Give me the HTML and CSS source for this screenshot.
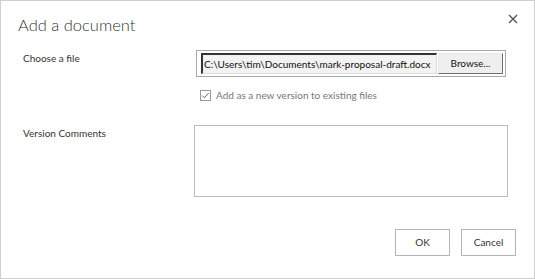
FILE: index.html
```html
<!DOCTYPE html>
<html>
<head>
<meta charset="utf-8">
<link rel="stylesheet" href="styles.css">
</head>
<body>
<div class="dialog">
  <div class="header">
    <h1 class="title">Add a document</h1>
    <span class="close" aria-label="Close">
      <svg width="10" height="10" viewBox="0 0 10 10"><path d="M1 1L9 9M9 1L1 9" stroke="#555" stroke-width="1.4" fill="none"/></svg>
    </span>
  </div>
  <div class="row row-file">
    <div class="label">Choose a file</div>
    <div class="field">
      <div class="filebox">
        <div class="filepath">C:\Users\tim\Documents\mark-proposal-draft.docx</div>
        <div class="browse">Browse...</div>
      </div>
      <label class="check">
        <span class="box"><svg width="9" height="9" viewBox="0 0 9 9"><path d="M1.2 4.6L3.4 6.8L7.8 1.8" stroke="#666" stroke-width="1" fill="none"/></svg></span>
        <span class="check-text">Add as a new version to existing files</span>
      </label>
    </div>
  </div>
  <div class="row row-comments">
    <div class="label">Version Comments</div>
    <div class="field">
      <div class="textarea"></div>
    </div>
  </div>
  <div class="footer">
    <div class="btn">OK</div>
    <div class="btn">Cancel</div>
  </div>
</div>
</body>
</html>
```

FILE: styles.css
```css
html, body {
  margin: 0;
  padding: 0;
  background: #fff;
}
.dialog {
  box-sizing: border-box;
  width: 535px;
  height: 279px;
  border: 1px solid #cfcfcf;
  padding: 10px 18px 22px 17px;
  font-family: Lato, "Open Sans", sans-serif;
  color: #333;
  display: flex;
  flex-direction: column;
}
.header {
  display: flex;
  justify-content: space-between;
  align-items: flex-start;
}
.title {
  margin: 0;
  font-size: 16.5px;
  font-weight: 300;
  line-height: 28px;
  color: #333;
}
.close {
  margin-top: 3px;
  margin-right: -2px;
  display: flex;
}
.row {
  display: grid;
  grid-template-columns: 176px 1fr;
}
.label {
  padding-left: 5px;
  font-size: 10px;
  line-height: 14px;
  color: #333;
}
.row-file {
  margin-top: 11px;
}
.row-file .label {
  padding-top: 1px;
}
.filebox {
  box-sizing: border-box;
  width: 310px;
  height: 27px;
  margin-left: 2px;
  border: 1px solid #a9a9a9;
  padding: 2px 2px 2px 4px;
  display: flex;
  gap: 1px;
}
.filepath {
  box-sizing: border-box;
  width: 236px;
  height: 21px;
  background: #f3f3f3;
  border-top: 2px solid #333;
  border-left: 2px solid #333;
  border-right: 1px solid #ddd;
  border-bottom: 1px solid #ddd;
  font-size: 10px;
  line-height: 18px;
  padding-left: 1px;
  color: #111;
  white-space: nowrap;
  overflow: hidden;
}
.browse {
  box-sizing: border-box;
  width: 65px;
  height: 21px;
  background: #efefef;
  border: 1px solid #e8e8e8;
  border-right-color: #707070;
  border-bottom-color: #707070;
  font-size: 10px;
  line-height: 19px;
  text-align: center;
  color: #111;
}
.check {
  display: flex;
  align-items: center;
  gap: 5px;
  margin-top: 11px;
  margin-left: 6px;
}
.box {
  box-sizing: border-box;
  width: 11px;
  height: 11px;
  border: 1px solid #999;
  display: flex;
  align-items: center;
  justify-content: center;
}
.check-text {
  font-size: 10px;
  line-height: 14px;
  color: #777;
}
.row-comments {
  margin-top: 23px;
}
.row-comments .label {
  padding-top: 1px;
}
.textarea {
  box-sizing: border-box;
  width: 314px;
  height: 72px;
  border: 1px solid #bcbcbc;
  background: #fff;
}
.footer {
  margin-top: auto;
  display: flex;
  justify-content: flex-end;
  gap: 11px;
}
.btn {
  box-sizing: border-box;
  width: 55px;
  height: 27px;
  border: 1px solid #b5b5b5;
  font-size: 10px;
  line-height: 25px;
  text-align: center;
  color: #333;
  background: #fff;
}
```
